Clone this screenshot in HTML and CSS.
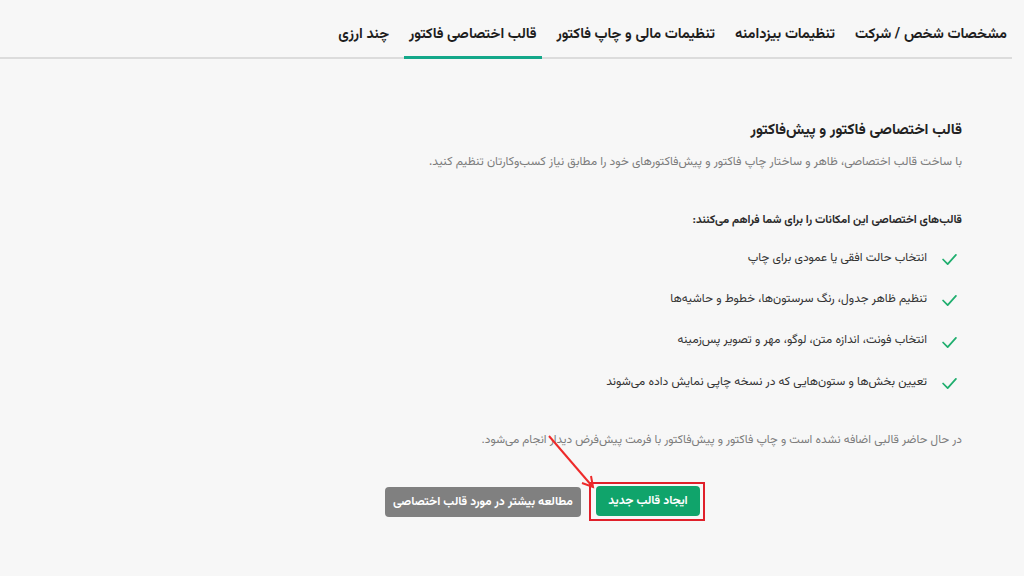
FILE: index.html
```html
<!DOCTYPE html>
<html lang="fa" dir="rtl">
<head>
  <meta charset="utf-8">
  <link rel="stylesheet" href="styles.css">
</head>
<body>
  <nav class="tabs">
    <a class="tab">مشخصات شخص / شرکت</a>
    <a class="tab">تنظیمات بیزدامنه</a>
    <a class="tab">تنظیمات مالی و چاپ فاکتور</a>
    <a class="tab active">قالب اختصاصی فاکتور</a>
    <a class="tab">چند ارزی</a>
  </nav>

  <main class="panel">
    <h2 class="title">قالب اختصاصی فاکتور و پیش‌فاکتور</h2>
    <p class="lead">با ساخت قالب اختصاصی، ظاهر و ساختار چاپ فاکتور و پیش‌فاکتورهای خود را مطابق نیاز کسب‌وکارتان تنظیم کنید.</p>

    <h3 class="subtitle">قالب‌های اختصاصی این امکانات را برای شما فراهم می‌کنند:</h3>
    <ul class="features">
      <li><svg class="check" viewBox="0 0 16 12"><path d="M1 6 L6 11 L15 1"/></svg>انتخاب حالت افقی یا عمودی برای چاپ</li>
      <li><svg class="check" viewBox="0 0 16 12"><path d="M1 6 L6 11 L15 1"/></svg>تنظیم ظاهر جدول، رنگ سرستون‌ها، خطوط و حاشیه‌ها</li>
      <li><svg class="check" viewBox="0 0 16 12"><path d="M1 6 L6 11 L15 1"/></svg>انتخاب فونت، اندازه متن، لوگو، مهر و تصویر پس‌زمینه</li>
      <li><svg class="check" viewBox="0 0 16 12"><path d="M1 6 L6 11 L15 1"/></svg>تعیین بخش‌ها و ستون‌هایی که در نسخه چاپی نمایش داده می‌شوند</li>
    </ul>

    <p class="note">در حال حاضر قالبی اضافه نشده است و چاپ فاکتور و پیش‌فاکتور با فرمت پیش‌فرض دیدار انجام می‌شود.</p>

    <div class="actions">
      <span class="highlight"><button class="btn btn-primary">ایجاد قالب جدید</button></span>
      <button class="btn btn-muted">مطالعه بیشتر در مورد قالب اختصاصی</button>
      <svg class="pointer" viewBox="0 0 50 56"><path d="M2 2 L45 52"/><path d="M35 49 L46 53 L44 42"/></svg>
    </div>
  </main>
</body>
</html>
```

FILE: styles.css
```css
body {
  margin: 0;
  background: #f7f7f7;
  font-family: "Vazirmatn", "Noto Sans Arabic", "DejaVu Sans", sans-serif;
  color: #222;
  height: 576px;
  overflow: hidden;
}

/* top tab bar */
.tabs {
  display: flex;
  gap: 10px;
  margin: 0 12px 0 0;
  padding: 0;
  height: 57px;
  border-bottom: 2px solid #dcdcdc;
  align-items: stretch;
}

.tab {
  display: flex;
  align-items: center;
  padding: 12px 5px 0;
  font-size: 14.5px;
  font-weight: bold;
  color: #1e1e1e;
  border-bottom: 3px solid transparent;
  margin-bottom: -2px;
  white-space: nowrap;
  cursor: pointer;
}

.tab.active {
  border-bottom-color: #14a88a;
}

/* content */
.panel {
  padding: 60px 62px 0 0;
  width: 530px;
}

.title {
  margin: 0;
  font-size: 15px;
  font-weight: bold;
  color: #222;
}

.lead {
  margin: 11px 0 0;
  font-size: 12px;
  color: #7c7c7c;
  white-space: nowrap;
}

.subtitle {
  margin: 40px 0 0;
  font-size: 11.5px;
  font-weight: bold;
  color: #2a2a2a;
}

.features {
  list-style: none;
  margin: 8px 0 0;
  padding: 0 5px 0 0;
}

.features li {
  display: flex;
  align-items: center;
  gap: 15px;
  height: 41.3px;
  font-size: 12px;
  color: #333;
  white-space: nowrap;
}

.check {
  width: 15px;
  height: 11px;
  margin-top: 4px;
  fill: none;
  stroke: #1fae6e;
  stroke-width: 1.9;
  stroke-linecap: round;
  stroke-linejoin: round;
}

.note {
  margin: 29px 0 0;
  font-size: 11.8px;
  color: #7c7c7c;
  white-space: nowrap;
}

.actions {
  position: relative;
  display: flex;
  gap: 8px;
  margin: 33px 257px 0 0;
  align-items: center;
}

.highlight {
  display: inline-block;
  flex-shrink: 0;
  padding: 2px 3px 3px 5px;
  border: 2px solid #e0202a;
}

.btn {
  flex-shrink: 0;
  font-family: inherit;
  font-size: 12px;
  font-weight: bold;
  color: #fff;
  border: none;
  border-radius: 4px;
  height: 30px;
  padding: 0;
  white-space: nowrap;
  cursor: pointer;
}

.btn-primary {
  background: #10a46b;
  width: 104px;
}

.btn-muted {
  background: #808080;
  width: 196px;
}

.pointer {
  position: absolute;
  top: -48px;
  right: 108px;
  width: 50px;
  height: 56px;
  fill: none;
  stroke: #ee2a2a;
  stroke-width: 2;
}
```
